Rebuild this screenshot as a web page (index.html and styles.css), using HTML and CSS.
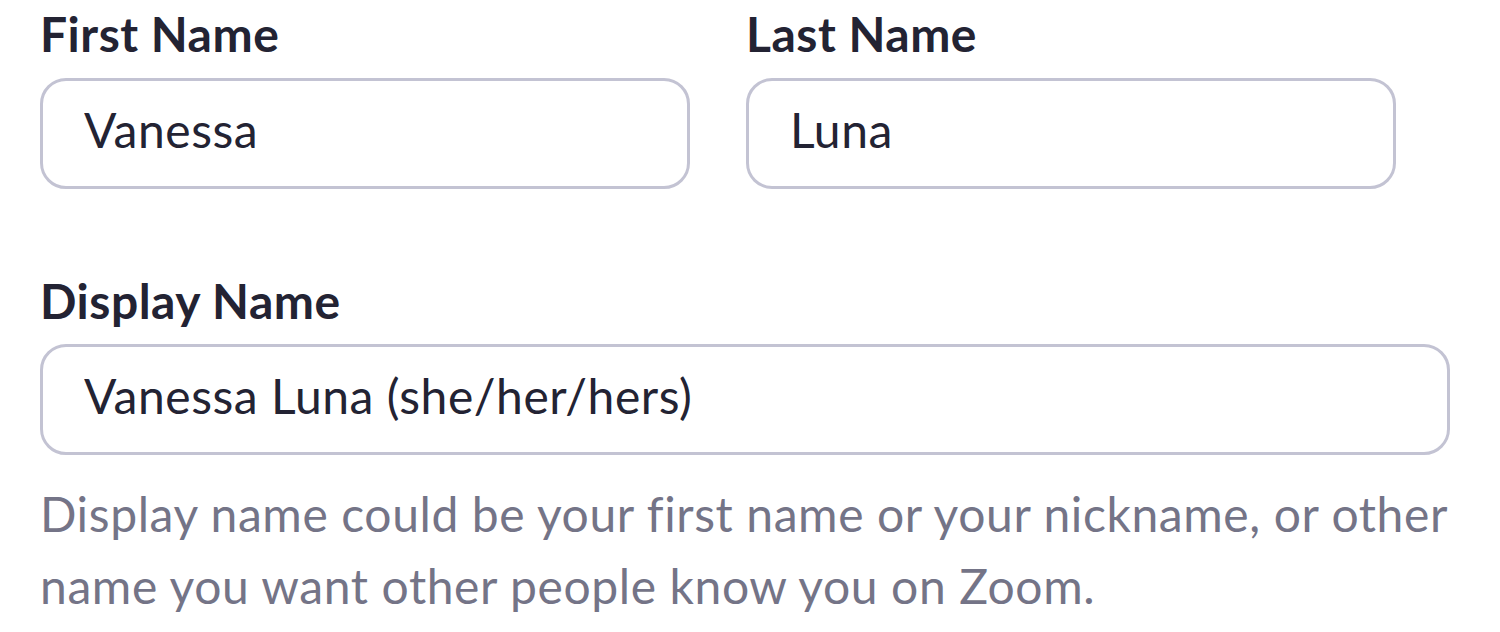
FILE: index.html
```html
<!DOCTYPE html>
<html lang="en">
<head>
<meta charset="utf-8">
<title>Profile name</title>
<link rel="stylesheet" href="styles.css">
</head>
<body>
<form class="form">
  <div class="row">
    <div class="field">
      <label class="label" for="first">First Name</label>
      <input class="input" id="first" type="text" value="Vanessa">
    </div>
    <div class="field">
      <label class="label" for="last">Last Name</label>
      <input class="input" id="last" type="text" value="Luna">
    </div>
  </div>
  <div class="field field-wide">
    <label class="label" for="display">Display Name</label>
    <input class="input" id="display" type="text" value="Vanessa Luna (she/her/hers)">
    <p class="help">Display name could be your first name or your nickname, or other name you want other people know you on Zoom.</p>
  </div>
</form>
</body>
</html>
```
FILE: styles.css
```css
html, body {
  margin: 0;
  padding: 0;
  background: #ffffff;
}
body {
  font-family: Lato, "Open Sans", Arial, sans-serif;
  color: #232333;
}
.form {
  padding: 5px 0 0 40px;
  width: 1410px;
}
.row {
  display: flex;
  gap: 56px;
}
.field {
  display: flex;
  flex-direction: column;
  width: 650px;
}
.field-wide {
  width: 1410px;
  margin-top: 83px;
}
.label {
  font-size: 48px;
  line-height: 1.2;
  font-weight: 700;
  letter-spacing: 0.5px;
  color: #232333;
  margin-bottom: 15px;
}
.input {
  box-sizing: border-box;
  width: 100%;
  height: 111px;
  margin: 0;
  border: 3px solid #c3c3d3;
  border-radius: 26px;
  padding: 0 40px 8px 41px;
  font-family: inherit;
  font-size: 48px;
  letter-spacing: 0.55px;
  color: #232333;
  background: #ffffff;
  outline: none;
}
.help {
  margin: 23px 0 0 0;
  font-size: 48px;
  line-height: 72px;
  letter-spacing: 0.6px;
  color: #747487;
}
```
